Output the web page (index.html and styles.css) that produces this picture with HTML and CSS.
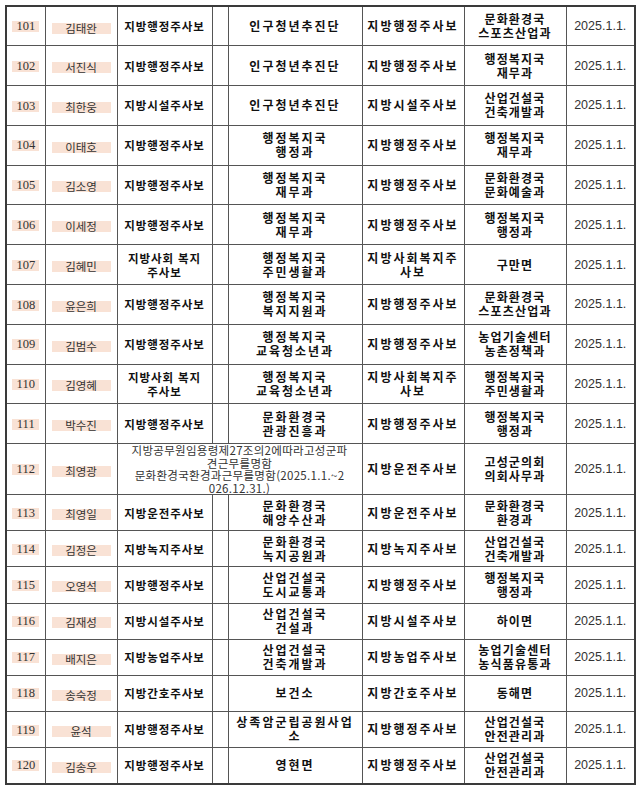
FILE: index.html
```html
<!DOCTYPE html>
<html lang="ko">
<head>
<meta charset="utf-8">
<title>인사발령</title>
<link rel="stylesheet" href="styles.css">
</head>
<body>
<table class="roster">
  <colgroup>
    <col class="c-num"><col class="c-name"><col class="c-pos"><col class="c-gap"><col class="c-dept"><col class="c-pos2"><col class="c-dept2"><col class="c-date">
  </colgroup>
  <tbody>
    <tr class="r-a"><td class="num"><span class="hl">101</span></td><td class="name"><span class="hl">김태완</span></td><td class="pos">지방행정주사보</td><td></td><td class="dept">인구청년추진단</td><td class="pos2">지방행정주사보</td><td class="dept2">문화환경국<br>스포츠산업과</td><td class="date">2025.1.1.</td></tr>
    <tr class="r-a"><td class="num"><span class="hl">102</span></td><td class="name"><span class="hl">서진식</span></td><td class="pos">지방행정주사보</td><td></td><td class="dept">인구청년추진단</td><td class="pos2">지방행정주사보</td><td class="dept2">행정복지국<br>재무과</td><td class="date">2025.1.1.</td></tr>
    <tr class="r-a"><td class="num"><span class="hl">103</span></td><td class="name"><span class="hl">최한웅</span></td><td class="pos">지방시설주사보</td><td></td><td class="dept">인구청년추진단</td><td class="pos2">지방시설주사보</td><td class="dept2">산업건설국<br>건축개발과</td><td class="date">2025.1.1.</td></tr>
    <tr class="r-a"><td class="num"><span class="hl">104</span></td><td class="name"><span class="hl">이태호</span></td><td class="pos">지방행정주사보</td><td></td><td class="dept">행정복지국<br>행정과</td><td class="pos2">지방행정주사보</td><td class="dept2">행정복지국<br>재무과</td><td class="date">2025.1.1.</td></tr>
    <tr class="r-a"><td class="num"><span class="hl">105</span></td><td class="name"><span class="hl">김소영</span></td><td class="pos">지방행정주사보</td><td></td><td class="dept">행정복지국<br>재무과</td><td class="pos2">지방행정주사보</td><td class="dept2">문화환경국<br>문화예술과</td><td class="date">2025.1.1.</td></tr>
    <tr class="r-a"><td class="num"><span class="hl">106</span></td><td class="name"><span class="hl">이세정</span></td><td class="pos">지방행정주사보</td><td></td><td class="dept">행정복지국<br>재무과</td><td class="pos2">지방행정주사보</td><td class="dept2">행정복지국<br>행정과</td><td class="date">2025.1.1.</td></tr>
    <tr class="r-a"><td class="num"><span class="hl">107</span></td><td class="name"><span class="hl">김혜민</span></td><td class="pos">지방사회 복지<br>주사보</td><td></td><td class="dept">행정복지국<br>주민생활과</td><td class="pos2">지방사회복지주<br>사보</td><td class="dept2">구만면</td><td class="date">2025.1.1.</td></tr>
    <tr class="r-a"><td class="num"><span class="hl">108</span></td><td class="name"><span class="hl">윤은희</span></td><td class="pos">지방행정주사보</td><td></td><td class="dept">행정복지국<br>복지지원과</td><td class="pos2">지방행정주사보</td><td class="dept2">문화환경국<br>스포츠산업과</td><td class="date">2025.1.1.</td></tr>
    <tr class="r-a"><td class="num"><span class="hl">109</span></td><td class="name"><span class="hl">김범수</span></td><td class="pos">지방행정주사보</td><td></td><td class="dept">행정복지국<br>교육청소년과</td><td class="pos2">지방행정주사보</td><td class="dept2">농업기술센터<br>농촌정책과</td><td class="date">2025.1.1.</td></tr>
    <tr class="r-a"><td class="num"><span class="hl">110</span></td><td class="name"><span class="hl">김영혜</span></td><td class="pos">지방사회 복지<br>주사보</td><td></td><td class="dept">행정복지국<br>교육청소년과</td><td class="pos2">지방사회복지주<br>사보</td><td class="dept2">행정복지국<br>주민생활과</td><td class="date">2025.1.1.</td></tr>
    <tr class="r-a"><td class="num"><span class="hl">111</span></td><td class="name"><span class="hl">박수진</span></td><td class="pos">지방행정주사보</td><td></td><td class="dept">문화환경국<br>관광진흥과</td><td class="pos2">지방행정주사보</td><td class="dept2">행정복지국<br>행정과</td><td class="date">2025.1.1.</td></tr>
    <tr class="r-b"><td class="num"><span class="hl">112</span></td><td class="name"><span class="hl">최영광</span></td><td class="note" colspan="3">지방공무원임용령제27조의2에따라고성군파<br>견근무를명함<br>문화환경국환경과근무를명함(2025.1.1.~2<br>026.12.31.)</td><td class="pos2">지방운전주사보</td><td class="dept2">고성군의회<br>의회사무과</td><td class="date">2025.1.1.</td></tr>
    <tr class="r-c"><td class="num"><span class="hl">113</span></td><td class="name"><span class="hl">최영일</span></td><td class="pos">지방운전주사보</td><td></td><td class="dept">문화환경국<br>해양수산과</td><td class="pos2">지방운전주사보</td><td class="dept2">문화환경국<br>환경과</td><td class="date">2025.1.1.</td></tr>
    <tr class="r-c"><td class="num"><span class="hl">114</span></td><td class="name"><span class="hl">김정은</span></td><td class="pos">지방녹지주사보</td><td></td><td class="dept">문화환경국<br>녹지공원과</td><td class="pos2">지방녹지주사보</td><td class="dept2">산업건설국<br>건축개발과</td><td class="date">2025.1.1.</td></tr>
    <tr class="r-c"><td class="num"><span class="hl">115</span></td><td class="name"><span class="hl">오영석</span></td><td class="pos">지방행정주사보</td><td></td><td class="dept">산업건설국<br>도시교통과</td><td class="pos2">지방행정주사보</td><td class="dept2">행정복지국<br>행정과</td><td class="date">2025.1.1.</td></tr>
    <tr class="r-c"><td class="num"><span class="hl">116</span></td><td class="name"><span class="hl">김재성</span></td><td class="pos">지방시설주사보</td><td></td><td class="dept">산업건설국<br>건설과</td><td class="pos2">지방시설주사보</td><td class="dept2">하이면</td><td class="date">2025.1.1.</td></tr>
    <tr class="r-c"><td class="num"><span class="hl">117</span></td><td class="name"><span class="hl">배지은</span></td><td class="pos">지방농업주사보</td><td></td><td class="dept">산업건설국<br>건축개발과</td><td class="pos2">지방농업주사보</td><td class="dept2">농업기술센터<br>농식품유통과</td><td class="date">2025.1.1.</td></tr>
    <tr class="r-c"><td class="num"><span class="hl">118</span></td><td class="name"><span class="hl">송숙정</span></td><td class="pos">지방간호주사보</td><td></td><td class="dept">보건소</td><td class="pos2">지방간호주사보</td><td class="dept2">동해면</td><td class="date">2025.1.1.</td></tr>
    <tr class="r-c"><td class="num"><span class="hl">119</span></td><td class="name"><span class="hl">윤석</span></td><td class="pos">지방행정주사보</td><td></td><td class="dept">상족암군립공원사업<br>소</td><td class="pos2">지방행정주사보</td><td class="dept2">산업건설국<br>안전관리과</td><td class="date">2025.1.1.</td></tr>
    <tr class="r-c"><td class="num"><span class="hl">120</span></td><td class="name"><span class="hl">김송우</span></td><td class="pos">지방행정주사보</td><td></td><td class="dept">영현면</td><td class="pos2">지방행정주사보</td><td class="dept2">산업건설국<br>안전관리과</td><td class="date">2025.1.1.</td></tr>
  </tbody>
</table>
</body>
</html>
```

FILE: styles.css
```css
html, body {
  margin: 0;
  padding: 0;
  background: #ffffff;
}

body {
  padding: 5px 0 0 5px;
  font-family: "Noto Sans CJK KR", "Noto Sans", sans-serif;
  color: #222;
}

.roster {
  border-collapse: collapse;
  table-layout: fixed;
  width: 629px;
  border: 2px solid #3a3a3a;
}

.c-num { width: 39px; }
.c-name { width: 72px; }
.c-pos { width: 95px; }
.c-gap { width: 16px; }
.c-dept { width: 134px; }
.c-pos2 { width: 102px; }
.c-dept2 { width: 102px; }
.c-date { width: 69px; }

.roster td {
  border: 1px solid #555;
  padding: 0;
  text-align: center;
  vertical-align: middle;
  white-space: nowrap;
  overflow: hidden;
}

.r-a { height: 39.8px; }
.r-b { height: 51px; }
.r-c { height: 36.1px; }

.hl {
  display: inline-block;
  background: #f9e2d5;
  height: 11px;
  line-height: 11px;
  vertical-align: middle;
}

.num {
  font-family: "Liberation Serif", "DejaVu Serif", serif;
  font-size: 12.5px;
  color: #333;
}
.num .hl { width: 27px; }

.name {
  font-size: 11.5px;
  color: #333;
}
.name .hl { width: 59px; }

.pos {
  font-size: 11.5px;
  font-weight: 700;
  line-height: 14px;
  letter-spacing: 0.9px;
  color: #111;
}

.dept, .pos2, .dept2 {
  font-size: 12px;
  font-weight: 700;
  line-height: 14px;
  color: #111;
}

.dept, .pos2 {
  letter-spacing: 2px;
}

.dept2 {
  letter-spacing: 1.2px;
}

.note {
  font-size: 11.5px;
  line-height: 12.4px;
  letter-spacing: 0.3px;
  color: #333;
}

.date {
  font-family: "Liberation Sans", Arial, sans-serif;
  font-size: 12.5px;
  color: #333;
}
```
